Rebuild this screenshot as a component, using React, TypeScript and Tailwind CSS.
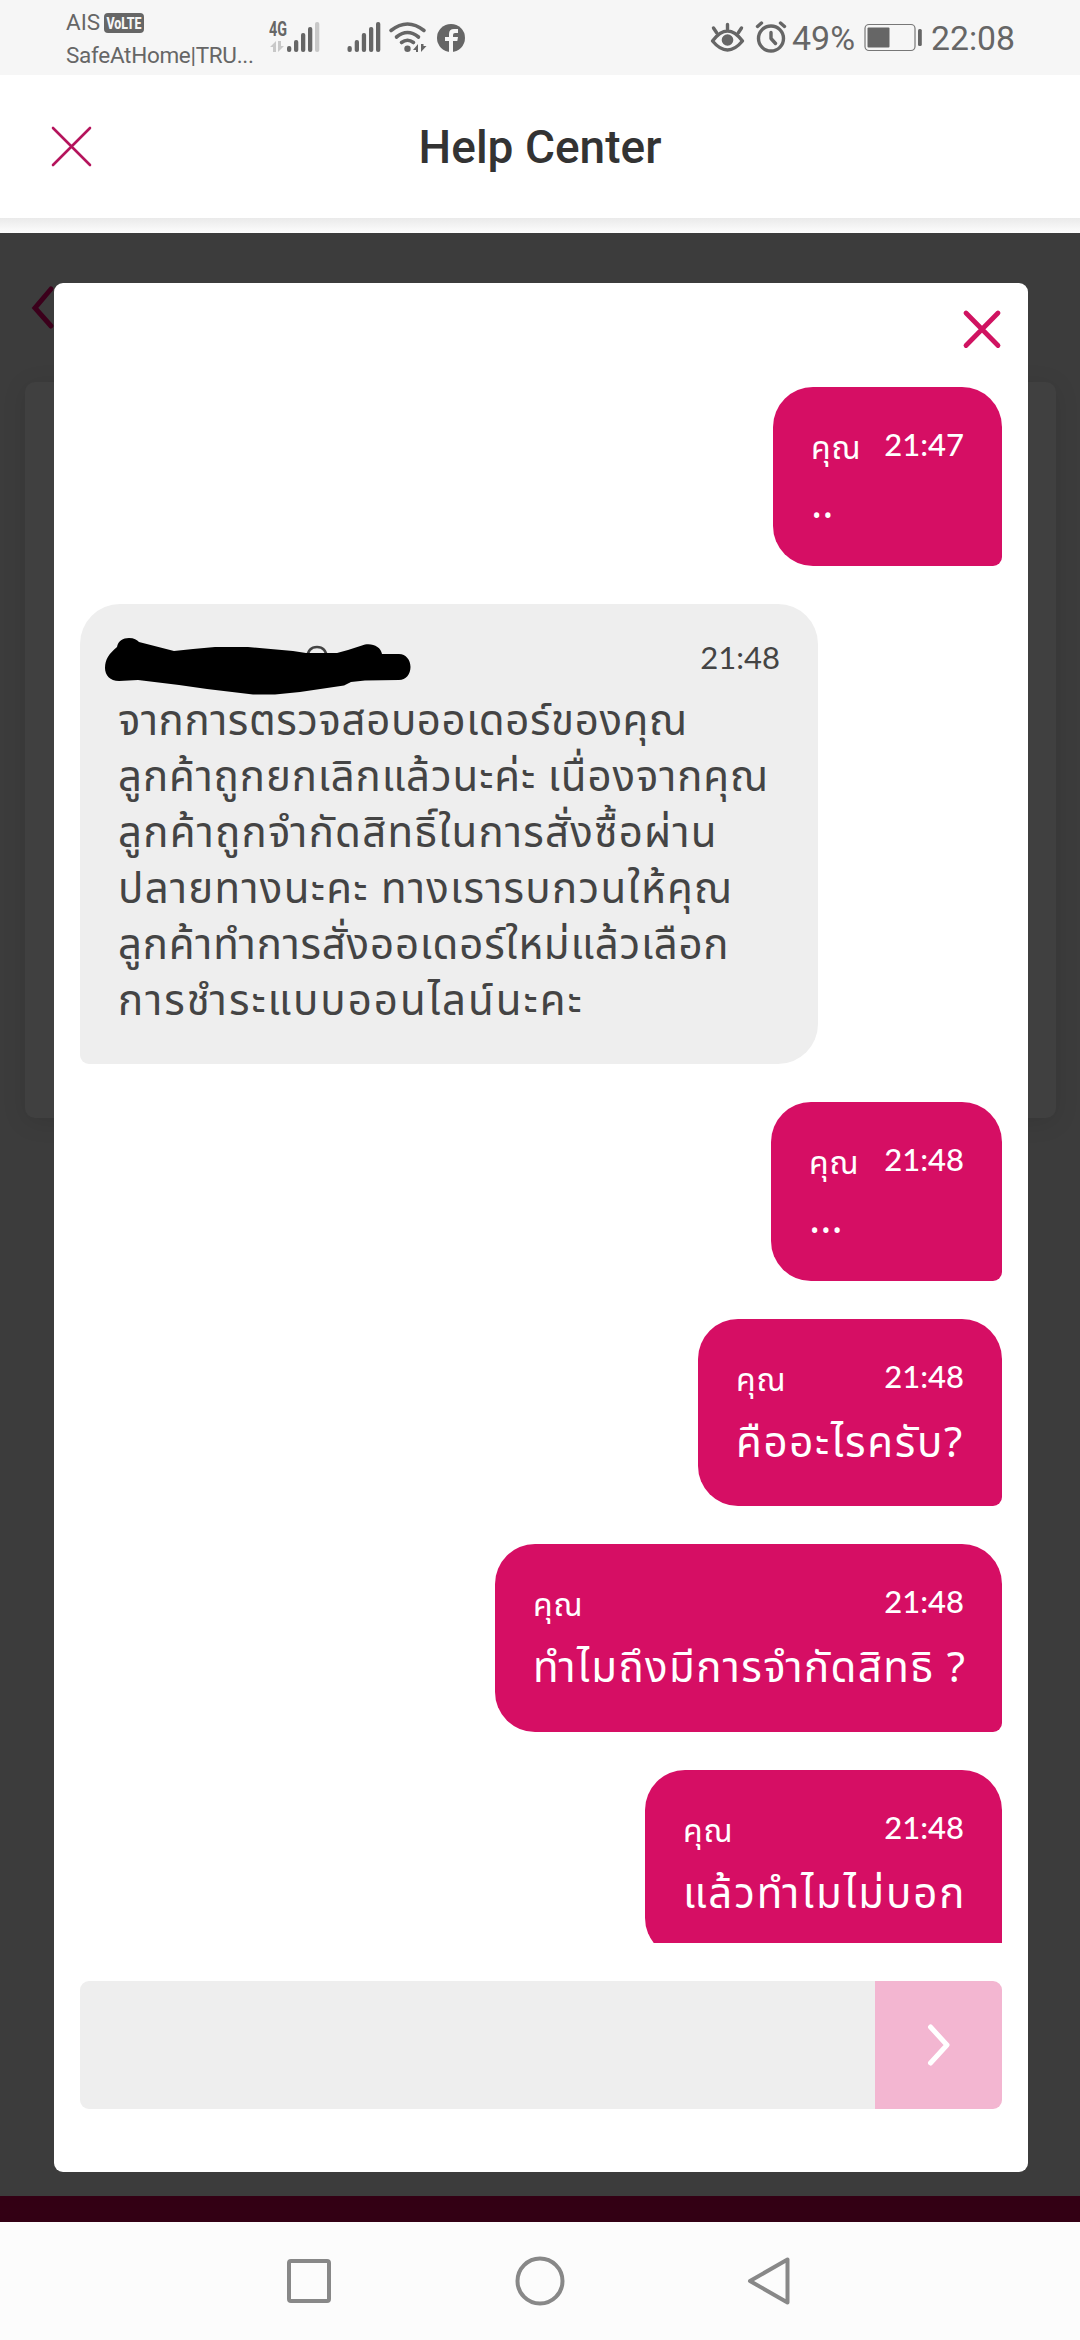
import React from 'react';

interface Line {
  text: string;
  tracking: string;
}

interface Message {
  id: number;
  mine: boolean;
  time: string;
  lines: Line[];
  box: string;
}

const messages: Message[] = [
  { id: 1, mine: true, time: '21:47', lines: [{ text: '..', tracking: '' }], box: 'w-[229px] h-[179px]' },
  {
    id: 2,
    mine: false,
    time: '21:48',
    lines: [
      { text: 'จากการตรวจสอบออเดอร์ของคุณ', tracking: 'tracking-[0.6px]' },
      { text: 'ลูกค้าถูกยกเลิกแล้วนะค่ะ เนื่องจากคุณ', tracking: 'tracking-[0.9px]' },
      { text: 'ลูกค้าถูกจำกัดสิทธิ์ในการสั่งซื้อผ่าน', tracking: 'tracking-[1.25px]' },
      { text: 'ปลายทางนะคะ ทางเรารบกวนให้คุณ', tracking: 'tracking-[1.3px]' },
      { text: 'ลูกค้าทำการสั่งออเดอร์ใหม่แล้วเลือก', tracking: 'tracking-[0.8px]' },
      { text: 'การชำระแบบออนไลน์นะคะ', tracking: 'tracking-[2px]' },
    ],
    box: 'w-[738px] h-[460px]',
  },
  { id: 3, mine: true, time: '21:48', lines: [{ text: '...', tracking: '' }], box: 'w-[231px] h-[179px]' },
  { id: 4, mine: true, time: '21:48', lines: [{ text: 'คืออะไรครับ?', tracking: 'tracking-[1.7px]' }], box: 'w-[304px] h-[187px] [&_p]:pt-[7px]' },
  { id: 5, mine: true, time: '21:48', lines: [{ text: 'ทำไมถึงมีการจำกัดสิทธิ ?', tracking: 'tracking-[1.4px]' }], box: 'w-[507px] h-[188px] [&_p]:pt-[7px]' },
  { id: 6, mine: true, time: '21:48', lines: [{ text: 'แล้วทำไมไม่บอก', tracking: 'tracking-[1.9px]' }], box: 'w-[357px] h-[188px] [&_p]:pt-[7px]' },
];

const StatusBar = () => (
  <div className="relative h-[75px] bg-[#f6f6f6] shrink-0 font-[Roboto,sans-serif] text-[#666]">
    <div className="pl-[66px] pt-[9px] text-[22.5px] leading-[27px]">
      <div className="flex items-center gap-[5px]">
        <span className="w-[33px]">AIS</span>
        <svg width="40" height="20" className="overflow-visible">
          <rect width="40" height="20" rx="4" fill="#666" />
          <text x="2.500" y="15.500" fontSize="16" fontWeight="800" fill="#f6f6f6" textLength="35" lengthAdjust="spacingAndGlyphs">VoLTE</text>
        </svg>
      </div>
      <div className="mt-[6px] tracking-[-0.3px]">SafeAtHome|TRU...</div>
    </div>
    <svg className="absolute left-0 top-0" width="1080" height="75" fill="#666">
      <text x="269" y="36" fontSize="20" fontWeight="700" textLength="18" lengthAdjust="spacingAndGlyphs">4G</text>
      <g fill="#c8c8c8">
        <path d="M270 47l6-6v11h-3v-5zM278 41v11l6-6h-3v-5z" />
        <rect x="315" y="22" width="4.300" height="30" rx="2" />
      </g>
      {[287, 294, 301, 308].map((x, i) => (
        <rect key={x} x={x} y={[46, 40, 33, 27][i]} width="4.300" height={[6, 12, 19, 25][i]} rx="2" />
      ))}
      {[347.5, 354.7, 361.8, 369, 376].map((x, i) => (
        <rect key={x} x={x} y={[46, 40, 33, 27, 22][i]} width="4.300" height={[6, 12, 19, 25, 30][i]} rx="2" />
      ))}
      <path
        d="M391 30.500Q407.500 17.500 424 30.500M396.500 37Q407.500 28 418.500 37M401.500 42.500Q407.500 38 413.500 42.500"
        fill="none"
        stroke="#666"
        strokeWidth="3.600"
        strokeLinecap="round"
      />
      <circle cx="407.500" cy="48.700" r="3.200" />
      <path d="M413 50l5-6v8h-2v-2zM421 44v8l5.500-6h-3v-2z" />
      <circle cx="451" cy="38" r="14" />
      <path d="M449 52V41h-4v-4h4v-3q0-5 5-5h4v4h-3q-2 0-2 2v2h5l-.7 4H453v11z" fill="#f6f6f6" />
      <g fill="none" stroke="#666" strokeWidth="3.400" strokeLinecap="round" strokeLinejoin="round">
        <path d="M712.500 41Q727.500 21 742.500 41Q727.500 59 712.500 41ZM727.500 24.500v5M713.500 28l3 4.500M741.500 28l-3 4.500" />
        <circle cx="771" cy="38.500" r="12.500" />
        <path d="M771 32.500v6l4.500 5M757.500 26.500l4-3.500M784.500 26.500l-4-3.500" />
      </g>
      <circle cx="727.500" cy="40" r="5.800" />
      <text x="792" y="50" fontSize="33.500" textLength="63" lengthAdjust="spacingAndGlyphs">49%</text>
      <rect x="865" y="24.500" width="50" height="26" rx="4" fill="none" stroke="#777" strokeWidth="1.200" />
      <rect x="867.500" y="27.500" width="22" height="20" rx="1" />
      <rect x="918" y="29" width="3.800" height="17" rx="1.500" />
      <text x="931" y="50" fontSize="33.500" textLength="84" lengthAdjust="spacingAndGlyphs">22:08</text>
    </svg>
  </div>
);

const Header = () => (
  <header className="relative h-[143px] shrink-0 bg-white flex items-center justify-center">
    <button className="absolute left-[50px] top-[50px]">
      <svg width="44" height="44" stroke="#b5145c" strokeWidth="2.600" strokeLinecap="round">
        <path d="M3 3L40 40M40 3L3 40" />
      </svg>
    </button>
    <h1 className="font-[Roboto,sans-serif] font-medium text-[46px] leading-none text-[#333]">Help Center</h1>
  </header>
);

// marker stroke that hides the agent's name
const Redaction = () => (
  <svg className="absolute left-[20px] top-[30px]" width="320" height="64">
    <path d="M207 24Q208 13 217 13Q226 13 227 24" fill="none" stroke="#444" strokeWidth="2.400" />
    <path d="M17 13C18 7 23 4 29 4C34 4 37 6 39 8L74 17L93 15L115 13L148 13L193 17L206 19L237 19L248 16L265 10.500C273 9 281 13 282 20L299 20C306 20 310.500 26 310.500 33C310.500 40 306 46 299 46L265 46.500L251 48L244 51.500L200 58L175 60.500L153 60.500L107 55L79 51L38 46L19 47C10 47 5 41 5 34C5 25 9 20 17 13Z" />
  </svg>
);

const Bubble: React.FC<{ message: Message }> = ({ message }) => {
  const { mine, time, lines, box } = message;
  return (
    <div
      className={`relative shrink-0 flex flex-col px-[38px] rounded-[40px] ${box} ${
        mine ? 'self-end bg-[#d60e64] text-white rounded-br-[9px]' : 'self-start bg-[#eee] text-[#444] rounded-bl-[9px]'
      }`}
    >
      <div className={`flex justify-between h-[90px] ${mine ? 'pt-[38px]' : 'pt-[34px]'}`}>
        <span className="text-[32px] leading-[49px] tracking-[0.8px]">{mine ? 'คุณ' : ''}</span>
        <span className={`font-[Lato,sans-serif] text-[31px] leading-[38px] ${mine ? 'font-medium' : ''}`}>{time}</span>
      </div>
      {!mine && <Redaction />}
      <div className="text-[42px] leading-[56px] whitespace-nowrap">
        {lines.map((line) => (
          <p key={line.text} className={line.tracking}>{line.text}</p>
        ))}
      </div>
    </div>
  );
};

const ChatModal = () => (
  <div className="absolute left-[54px] top-[50px] w-[974px] h-[1889px] bg-white rounded-[9px] px-[26px] flex flex-col">
    <div className="h-[104px] shrink-0 flex justify-end pt-[26px]">
      <svg width="40" height="40" stroke="#d01361" strokeWidth="4.800" strokeLinecap="round">
        <path d="M4 4L36 36.500M36 4L4 36.500" />
      </svg>
    </div>
    <div className="h-[1556px] shrink-0 overflow-hidden flex flex-col gap-[38px]">
      {messages.map((m) => (
        <Bubble key={m.id} message={m} />
      ))}
    </div>
    <div className="mt-[38px] h-[128px] flex rounded-[9px] overflow-hidden">
      <div className="flex-1 bg-[#eee]" />
      <button className="w-[127px] bg-[#f3b6d1] flex items-center justify-center">
        <svg width="24" height="44" fill="none" stroke="#fff" strokeWidth="5" strokeLinecap="round" strokeLinejoin="round">
          <path d="M3.500 4L20 22L3.500 40" />
        </svg>
      </button>
    </div>
  </div>
);

const NavBar = () => (
  <nav className="h-[118px] shrink-0 bg-[#fcfcfc] flex justify-center gap-[180px] pt-[34px]">
    <svg width="50" height="50" fill="none" stroke="#888" strokeWidth="4">
      <rect x="4" y="5" width="40" height="40" rx="2" />
    </svg>
    <svg width="50" height="50" fill="none" stroke="#888" strokeWidth="4">
      <circle cx="25" cy="25" r="22.500" />
    </svg>
    <svg width="50" height="50" fill="none" stroke="#888" strokeWidth="4" strokeLinejoin="round">
      <path d="M42.500 3.500V46.500L5 25Z" />
    </svg>
  </nav>
);

export default function App() {
  return (
    <div className="w-[1080px] h-[2340px] flex flex-col overflow-hidden bg-white font-['Noto_Sans_Thai','Noto_Sans',sans-serif]">
      <StatusBar />
      <Header />
      <div className="h-[15px] shrink-0 bg-linear-to-b from-[#eaeaea] to-[#fdfdfd]" />
      <main className="relative h-[1989px] shrink-0 bg-[#3c3c3c] flex flex-col">
        <svg className="absolute left-[28px] top-[48px]" width="50" height="54" fill="none" stroke="#3b001b" strokeWidth="5" strokeLinecap="round">
          <path d="M23 8L7 27L23 45" />
        </svg>
        <div className="mt-[149px] mx-auto w-[1031px] h-[736px] rounded-[10px] bg-[#404040] shadow-[0_4px_24px_rgba(0,0,0,0.1)]" />
        <div className="mt-auto h-[26px] bg-[#330014]" />
        <ChatModal />
      </main>
      <NavBar />
    </div>
  );
}
